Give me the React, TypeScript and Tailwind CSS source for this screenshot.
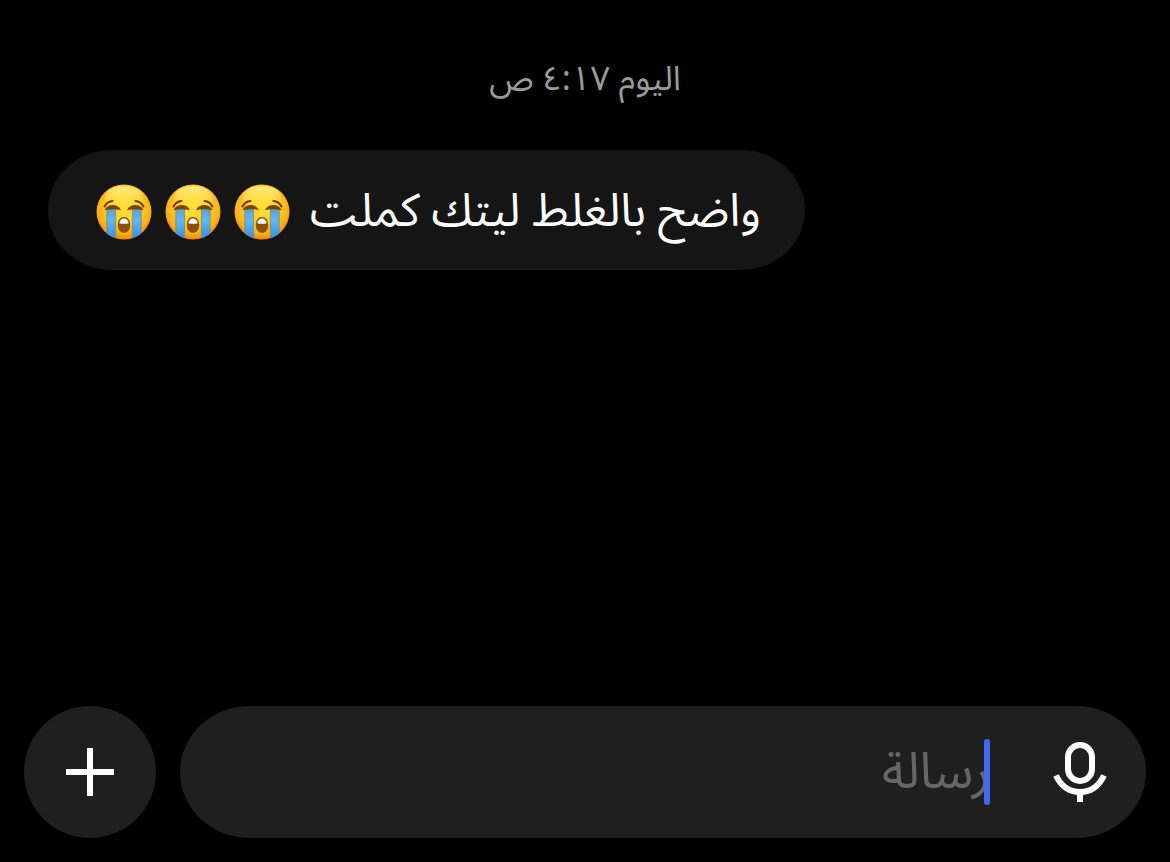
import { useId, useState } from "react";

// ─── Icons ─────────────────────────────────────────────────────────────────
function PlusIcon() {
  return (
    <svg viewBox="0 0 48 48" className="size-12" fill="none" stroke="currentColor" strokeWidth="6" aria-hidden="true">
      <path d="M24 0v48M0 24h48" />
    </svg>
  );
}

function MicIcon() {
  return (
    <svg viewBox="0 0 56 64" className="h-16 w-14" fill="none" stroke="currentColor" strokeWidth="6" aria-hidden="true">
      <rect x="16" y="5" width="24" height="36" rx="12" />
      <path d="M4 35.5C9 46 17 52 28 52s19-6 24-16.500" />
      <path d="M28 52v10" />
    </svg>
  );
}

function CryingFace() {
  const id = useId();
  const face = `${id}-face`;
  const shine = `${id}-shine`;
  const tear = `${id}-tear`;
  const clip = `${id}-clip`;

  return (
    <svg viewBox="0 0 56 56" className="size-14" role="img" aria-label="😭">
      <defs>
        <radialGradient id={face} cx="0.5" cy="0.42" r="0.6">
          <stop offset="0" stopColor="#ffdf35" />
          <stop offset="0.5" stopColor="#ffd02c" />
          <stop offset="0.8" stopColor="#fbae1c" />
          <stop offset="1" stopColor="#e87c08" />
        </radialGradient>
        <linearGradient id={shine} x1="0" y1="0" x2="0" y2="1">
          <stop offset="0" stopColor="#fffbb0" stopOpacity="0.7" />
          <stop offset="1" stopColor="#ffee60" stopOpacity="0" />
        </linearGradient>
        <linearGradient id={tear} x1="0" y1="0" x2="0" y2="1">
          <stop offset="0" stopColor="#5a9fd8" />
          <stop offset="0.35" stopColor="#62b8f6" />
          <stop offset="1" stopColor="#2f86e0" />
        </linearGradient>
        <clipPath id={clip}>
          <circle cx="28" cy="28" r="27.500" />
        </clipPath>
      </defs>
      <circle cx="28" cy="28" r="27.500" fill={`url(#${face})`} />
      <ellipse cx="28" cy="13.500" rx="19" ry="11.500" fill={`url(#${shine})`} />
      <g clipPath={`url(#${clip})`} fill={`url(#${tear})`} stroke="#8d9150" strokeWidth="0.9">
        <path d="M10.800 25h8.800v32h-8.800z" />
        <path d="M36.400 25h8.800v32h-8.800z" />
      </g>
      <g fill="none" stroke="#6b3a05" strokeLinecap="round">
        <path d="M8.500 22.500c1.500-3 4.500-5.300 8-5.600" strokeWidth="2" />
        <path d="M47.500 22.500c-1.500-3-4.500-5.300-8-5.600" strokeWidth="2" />
      </g>
      <g fill="#7a4306">
        <path d="M8.500 26.200c3-6.800 13.500-6.800 16.500 0-5-1.300-11-1.300-16.500 0z" />
        <path d="M47.500 26.200c-3-6.800-13.500-6.800-16.500 0 5-1.300 11-1.300 16.500 0z" />
      </g>
      <path d="M28 33c-3.800 0-6.200 3.400-6.200 8s2.400 7.800 6.200 7.800 6.200-3.200 6.200-7.800-2.400-8-6.200-8z" fill="#8b5204" />
      <path d="M23.300 39.200c0.500-3 2.300-4.700 4.700-4.700s4.200 1.700 4.700 4.700c-2.800 0.700-6.600 0.700-9.400 0z" fill="#fff" />
    </svg>
  );
}

// ─── Messages ──────────────────────────────────────────────────────────────
interface Message {
  text: string;
  reactions: number;
}

const MESSAGES: Message[] = [{ text: "واضح بالغلط ليتك كملت", reactions: 3 }];

function MessageBubble({ text, reactions }: Message) {
  return (
    <li className="flex min-h-30 w-fit items-center gap-5 rounded-[64px/60px] bg-[#151515] ps-11 pe-12 pt-1 text-white">
      <span className="text-[46px] leading-16">{text}</span>
      <span className="flex shrink-0 gap-[13px]">
        {Array.from({ length: reactions }, (_, i) => (
          <CryingFace key={i} />
        ))}
      </span>
    </li>
  );
}

// ─── Composer ──────────────────────────────────────────────────────────────
function Composer() {
  const [draft, setDraft] = useState("");

  return (
    <form className="flex items-center gap-6" onSubmit={(e) => e.preventDefault()}>
      <div className="flex h-33 min-w-0 flex-1 items-center rounded-[70px/66px] bg-[#1f1f1f] px-[38px]">
        <button type="button" aria-label="تسجيل صوتي" className="shrink-0 text-white">
          <MicIcon />
        </button>
        <div className="relative ms-[62px] flex min-w-0 flex-1 items-center">
          <input
            type="text"
            aria-label="رسالة"
            placeholder="رسالة"
            value={draft}
            onChange={(e) => setDraft(e.target.value)}
            className="h-24 w-full bg-transparent text-[50px] text-white caret-[#4468f2] outline-none placeholder:text-[#666666]"
          />
          {!draft && (
            <span className="pointer-events-none absolute start-0 h-[66px] w-1.5 rounded-full bg-[#4468f2]" />
          )}
        </div>
      </div>
      <button
        type="button"
        aria-label="إضافة"
        className="flex size-33 shrink-0 items-center justify-center rounded-full bg-[#1f1f1f] text-white"
      >
        <PlusIcon />
      </button>
    </form>
  );
}

export default function App() {
  return (
    <div
      dir="rtl"
      lang="ar"
      className="flex min-h-screen flex-col bg-black p-6 font-['Noto_Sans_Arabic','DejaVu_Sans',sans-serif]"
    >
      <time className="mt-7 text-center text-[34px] leading-[54px] text-[#9a9a9a]">اليوم ٤:١٧ ص</time>
      <ul className="mt-11 flex flex-1 flex-col items-end px-6">
        {MESSAGES.map((message) => (
          <MessageBubble key={message.text} {...message} />
        ))}
      </ul>
      <Composer />
    </div>
  );
}
